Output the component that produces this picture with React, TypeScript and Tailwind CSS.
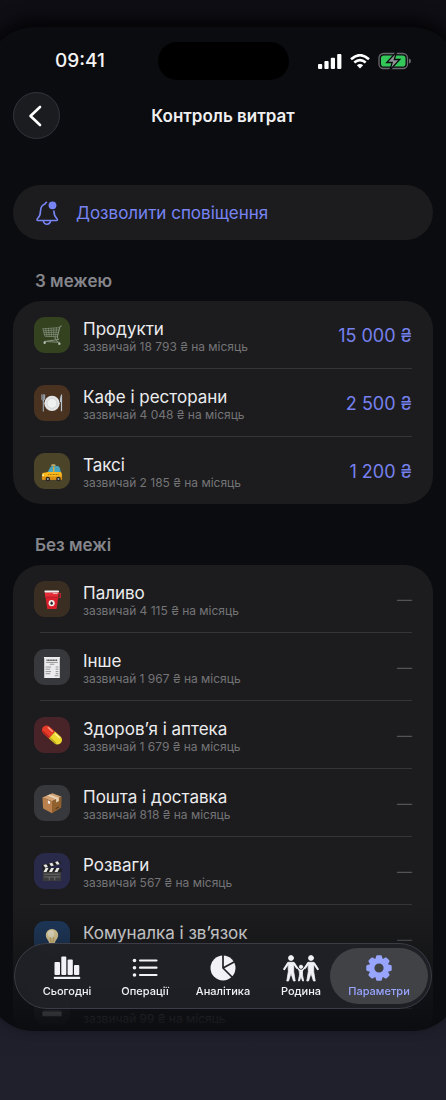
import React from "react";

type Row = { title?: string; usual?: string; limit?: string; tile: string; icon: React.ReactNode };

const Svg = ({ children }: { children: React.ReactNode }) => (
  <svg viewBox="0 0 24 24" className="h-[22px] w-[22px]" aria-hidden="true">{children}</svg>
);

const Cart = () => (
  <Svg>
    <g fill="none" stroke="#8b9584" strokeLinecap="round" strokeLinejoin="round">
      <path d="M22 2 L20.6 3.2 L17.8 14 L19 17 L4 19" strokeWidth="1.1" />
      <path d="M2.2 5.2 L19.8 4 M2.2 5.2 L4.2 13.4 L17.8 14 M2.8 7.4 L19.4 6.4 M3.3 9.4 L18.9 9 M3.8 11.4 L18.3 11.4 M5 5 L6.6 13.4 M8 4.8 L9 13.6 M11 4.6 L11.4 13.7 M14 4.4 L13.8 13.8 M17 4.2 L16 13.9" strokeWidth=".7" />
      <path d="M15 14.5 L18 19.5 M4 19 L20 20" strokeWidth="1" />
    </g>
    <circle cx="4" cy="20.500" r="1.3" fill="#b8bcb4" />
    <circle cx="20" cy="21.500" r="1.3" fill="#b8bcb4" />
  </Svg>
);

const Plate = () => (
  <Svg>
    <circle cx="12" cy="12.4" r="8.400" fill="#e4e5e6" />
    <circle cx="12" cy="12.4" r="5.4" fill="#eff0f0" stroke="#c7c8ca" strokeWidth=".7" />
    <path d="M1 3v5l1.5 1.6V21M2.5 3v6M4 3v5L2.5 9.6" fill="none" stroke="#a8bac8" strokeWidth="1" strokeLinecap="round" />
    <path d="M23 2c-2 2-2.500 5-2.300 9h1v10h1.300z" fill="#b5c6d2" />
  </Svg>
);

const Taxi = () => (
  <Svg>
    <g transform="translate(0 2)">
      <path d="M11.5 2.600h4l.5 2.200h-5z" fill="#b9ab6d" />
      <path d="M7 12l2.8-5.5Q10.4 5 12 4.8l6-.3q1.7 0 2.3 1.8L22 12z" fill="#48a3bd" />
      <path d="M13.200 5h1.300v7h-1.300zM7 11h15v1.500H7z" fill="#f5ad20" />
      <path d="M1.5 12.2L8 11h13.5l1.3 2v5.4q0 1-1.2 1H2.2q-1.2 0-1.2-1.3z" fill="#f9b91d" />
      <path d="M1 16h22v2.5q0 1-1.2 1H2.2q-1.2 0-1.2-1z" fill="#dc8e13" />
      <path d="M8 13.8h12" stroke="#805612" strokeWidth=".9" strokeDasharray="1 .7" />
      <circle cx="7.5" cy="18.8" r="2.5" fill="#252525" /><circle cx="7.5" cy="18.8" r="1.1" fill="#aaa" />
      <circle cx="19" cy="18.8" r="2.5" fill="#252525" /><circle cx="19" cy="18.8" r="1.1" fill="#aaa" />
      <circle cx="2.3" cy="14.6" r="1" fill="#fff0b0" />
    </g>
  </Svg>
);

const Cup = () => (
  <Svg>
    <path d="M17.5 6.2h3.6v4h-2" fill="none" stroke="#b5252b" strokeWidth="1.5" />
    <path d="M4.8 9.5h14L17 23H6.8z" fill="#d8202c" />
    <path d="M4 4.5h15.2l-.5 5.6H4.6z" fill="#e52e38" />
    <path d="M4.6 9.9h14.2" stroke="#8f141d" strokeWidth=".6" />
    <rect x="3.8" y="2.6" width="15.8" height="2.2" rx=".8" fill="#f1eeee" />
    <path d="M13 6h5" stroke="#e9b1b1" strokeWidth="1.1" />
    <circle cx="11.6" cy="16.500" r="3.3" fill="#f4f0ec" /><ellipse cx="11.6" cy="16.500" rx="1.3" ry="1.7" fill="#222" />
  </Svg>
);

const Receipt = () => (
  <Svg>
    <path d="M3 1h18l-.5 1.800V24h-17V2.800z" fill="#ececee" />
    <path d="M6 4.6h12" stroke="#555" strokeWidth="1.7" strokeDasharray="1.3 .4" />
    <path d="M5.6 7h12.8M9.5 9h5M5 12h6M5 14.4h5M5 17h6M5 19.3h5M16 12h3M16 14.4h3M16 17h3M16 19.3h3M15 21.5h4" stroke="#777" strokeWidth=".8" />
  </Svg>
);

const Pill = () => (
  <Svg>
    <g transform="rotate(42 12 12)">
      <path d="M12 7H4a5 5 0 0 0 0 10h8z" fill="#e63b28" />
      <path d="M12 7h8a5 5 0 0 1 0 10h-8z" fill="#eed72f" />
      <path d="M3.5 8.8h6" stroke="#ffa18c" strokeWidth="1.5" strokeLinecap="round" />
      <path d="M14 8.8h6" stroke="#fff299" strokeWidth="1.5" strokeLinecap="round" />
      <path d="M2 15.8h8.5" stroke="#aa2216" strokeWidth="1.2" strokeLinecap="round" />
      <path d="M13 15.8h8" stroke="#b6a01a" strokeWidth="1.2" strokeLinecap="round" />
    </g>
  </Svg>
);

const Box = () => (
  <Svg>
    <path d="M1.5 6L12.5 1.3 22.5 5.2 12 10.2z" fill="#d3a274" />
    <path d="M1.5 6L12 10.2V23.2L2.3 18z" fill="#b97f4c" />
    <path d="M22.5 5.2L12 10.2V23.2L22 17.3z" fill="#91602f" />
    <path d="M6.5 3.9l10 4.1v3.4l3-1.5V6.6L9.6 2.6z" fill="#e6d0b1" />
    <path d="M7.5 9.2l2.3 1v3l-2.3-1z" fill="#eee" />
    <path d="M16 18.2l3.3-1.8" stroke="#593c1e" strokeWidth="1.3" />
  </Svg>
);

const Clapper = () => (
  <Svg>
    <path d="M2 11.5h20v11.500H3q-1 0-1-1z" fill="#3b3b3c" />
    <path d="M2 8.8h20.5v4.4H2zM1 5.8L20.8 .8l1 3.6L2 9.2z" fill="#202020" />
    <path d="M5 8.8h3.2L6 13H2.7zM11 8.8h3.2L12 13H8.7zM17 8.8h3.2L18 13h-3.3zM2.6 5.4l3.2-.8 1.8 3-3 .8zM9 3.8l3.2-.8 1.8 3.1-3 .7zM15.4 2.2l3-.8 1.9 3.2-3 .7z" fill="#e7e7e4" />
    <path d="M3 15.5h18M3 18.5h18M9 18.5v3.7M15 18.5v3.7" stroke="#858585" strokeWidth=".7" />
  </Svg>
);

const Bulb = () => (
  <Svg>
    <path d="M12 1a6.7 6.7 0 0 0-6.7 6.8c0 4 3.2 5 3.7 9.2h6c.5-4.200 3.700-5.200 3.700-9.200A6.700 6.700 0 0 0 12 1z" fill="#f2dfa4" />
    <ellipse cx="11" cy="6.500" rx="3.500" ry="4" fill="#fff6d6" />
    <path d="M10 10l1 6M14 10l-1 6" stroke="#cba54e" strokeWidth=".8" />
    <path d="M9 17h6v4l-1.500 2h-3L9 21z" fill="#969a9e" />
  </Svg>
);

const Tray = () => (
  <Svg>
    <path d="M2 13h20M3 16h18" stroke="#777" strokeWidth="1" />
    <path d="M1.500 17h21v5h-21z" fill="#ccc" />
  </Svg>
);

const limited: Row[] = [
  { title: "Продукти", usual: "18 793", limit: "15 000 ₴", tile: "bg-[#35421f]", icon: <Cart /> },
  { title: "Кафе і ресторани", usual: "4 048", limit: "2 500 ₴", tile: "bg-[#4a3220]", icon: <Plate /> },
  { title: "Таксі", usual: "2 185", limit: "1 200 ₴", tile: "bg-[#4b4428]", icon: <Taxi /> },
];

const unlimited: Row[] = [
  { title: "Паливо", usual: "4 115", tile: "bg-[#3a2d22]", icon: <Cup /> },
  { title: "Інше", usual: "1 967", tile: "bg-[#37383b]", icon: <Receipt /> },
  { title: "Здоров’я і аптека", usual: "1 679", tile: "bg-[#482428]", icon: <Pill /> },
  { title: "Пошта і доставка", usual: "818", tile: "bg-[#37383b]", icon: <Box /> },
  { title: "Розваги", usual: "567", tile: "bg-[#29294a]", icon: <Clapper /> },
  { title: "Комуналка і зв’язок", tile: "bg-[#1f3a5e]", icon: <Bulb /> },
  { usual: "99", tile: "bg-[#303134]", icon: <Tray /> },
];

function List({ rows }: { rows: Row[] }) {
  return (
    <ul className="rounded-[28px] bg-[#1c1c1e] px-[21px]">
      {rows.map((r, i) => (
        <li key={i}>
          {i > 0 && <div className="ml-[6px] h-px bg-[#353537]" />}
          <div className="flex h-[67px] items-center">
            <div className={`flex size-9 shrink-0 items-center justify-center rounded-[11px] ${r.tile}`}>{r.icon}</div>
            <div className="ml-[13px] flex min-w-0 grow flex-col pt-[2px]">
              <span className="h-[22px] text-[17px] leading-[22px] text-[#ececee]">{r.title}</span>
              <span className="h-[14px] text-[12px] leading-[14px] text-[#747477]">
                {r.usual && `зазвичай ${r.usual} ₴ на місяць`}
              </span>
            </div>
            {r.limit ? (
              <button type="button" className="pt-[2px] text-[18px] leading-[22px] whitespace-nowrap text-[#7681ee]">{r.limit}</button>
            ) : (
              <button type="button" className="pt-[2px] text-[15px] leading-[22px] text-[#545457]">—</button>
            )}
          </div>
        </li>
      ))}
    </ul>
  );
}

const BarsIcon = () => (
  <svg viewBox="0 0 28 26" className="h-[26px] w-7" fill="currentColor" aria-hidden="true">
    <rect x="1.500" y="7" width="5.500" height="13" rx="1" /><rect x="8.300" y="1.500" width="5" height="18.500" rx="1" />
    <rect x="14.600" y="4.500" width="5.200" height="15.500" rx="1" /><rect x="21" y="10" width="5.300" height="10" rx="1" />
    <rect x=".7" y="21.800" width="26.600" height="2.200" rx="1" />
  </svg>
);
const ListIcon = () => (
  <svg viewBox="0 0 28 26" className="h-[26px] w-7" aria-hidden="true">
    <g fill="currentColor"><circle cx="3.500" cy="5.500" r="1.800" /><circle cx="3.500" cy="12.700" r="1.800" /><circle cx="3.500" cy="20" r="1.800" /></g>
    <path d="M9 5.500h16.500M9 12.700h16.500M9 20h16.500" stroke="currentColor" strokeWidth="2.200" strokeLinecap="round" />
  </svg>
);
const PieIcon = () => (
  <svg viewBox="0 0 28 26" className="h-[26px] w-7" fill="currentColor" aria-hidden="true">
    <circle cx="14" cy="13" r="12.500" />
    <path d="M14 -1v14l9.500 9.500M14 13l12-6.500" fill="none" stroke="#202126" strokeWidth="1.700" />
  </svg>
);
const FamilyIcon = () => (
  <svg viewBox="0 0 36 27" className="h-[27px] w-9" aria-hidden="true">
    <g fill="currentColor" stroke="currentColor" strokeLinecap="round" strokeLinejoin="round">
      <g strokeWidth=".8">
        <circle cx="8" cy="3" r="2.500" /><circle cx="28" cy="3" r="2.500" /><circle cx="18" cy="11.800" r="1.700" />
        <path d="M5.300 7.300h5.400v9.500l1.500 9.200h-1.700L8 18.300 5.500 26H3.800l1.500-9.200z" />
        <path d="M25.300 7.300h5.400v9.500l1.500 9.200h-1.700L28 18.300 25.500 26h-1.700l1.500-9.200z" />
        <path d="M16.500 15h3v5l1.100 6h-1L18 21.500 16.400 26h-1l1.100-6z" />
      </g>
      <g fill="none" strokeWidth="2.200">
        <path d="M5 8.300L1.300 14M11 8.300l2.700 4.200M31 8.300l3.700 5.700M25 8.300l-2.700 4.200" />
      </g>
      <path d="M14 12.500l2.800 3M22 12.500l-2.800 3" strokeWidth="1.500" fill="none" />
    </g>
  </svg>
);
const GearIcon = () => (
  <svg viewBox="0 0 28 28" className="h-7 w-7" aria-hidden="true">
    <g fill="currentColor">
      {[0, 45, 90, 135, 180, 225, 270, 315].map((a) => (
        <path key={a} d="M10.200 5.800l.9-3.600q.2-.9 1.100-.9h3.600q.9 0 1.100.9l.9 3.600z" transform={`rotate(${a} 14 14)`} />
      ))}
    </g>
    <circle cx="14" cy="14" r="7.300" fill="none" stroke="currentColor" strokeWidth="5.400" />
  </svg>
);

const tabs = [
  { label: "Сьогодні", icon: <BarsIcon /> },
  { label: "Операції", icon: <ListIcon /> },
  { label: "Аналітика", icon: <PieIcon /> },
  { label: "Родина", icon: <FamilyIcon /> },
  { label: "Параметри", icon: <GearIcon />, active: true },
];

export default function App() {
  return (
    <div className="min-h-screen overflow-hidden bg-linear-to-b from-[#0e0e14] to-[#1f202c] pt-[27px] pb-[69px] font-['Inter','Noto_Sans',sans-serif]">
      <main className="relative -mx-[15px] h-[1004px] overflow-hidden rounded-[50px] bg-[#0b0c10] px-7 shadow-[0_-8px_16px_0_#050507]">
        <header>
          <div className="grid h-[68px] grid-cols-3 items-center">
            <time className="pl-[42px] text-[19px] leading-6 font-medium text-[#f4f4f5]">09:41</time>
            <div className="h-[38px] w-[131px] justify-self-center rounded-full bg-black" />
            <div className="flex items-center justify-end gap-2 pr-[22px] text-white">
              <svg viewBox="0 0 24 15" className="h-[15px] w-6" fill="currentColor" aria-hidden="true">
                <rect x="0" y="10" width="4.200" height="5" rx="1" /><rect x="6.400" y="7" width="4.200" height="8" rx="1" />
                <rect x="12.800" y="3.800" width="4.200" height="11.200" rx="1" /><rect x="19.200" y="0" width="4.200" height="15" rx="1" />
              </svg>
              <svg viewBox="0 0 20 15" className="h-[15px] w-5" aria-hidden="true">
                <path d="M1 5.200q9-8 18 0M4.300 8.600q5.700-4.800 11.400 0" fill="none" stroke="currentColor" strokeWidth="2.600" />
                <path d="M6.800 11.200q3.200-2.500 6.400 0L10 14.500z" fill="currentColor" />
              </svg>
              <svg viewBox="0 0 33 18" className="h-[18px] w-[33px]" aria-hidden="true">
                <rect x="1" y="1.500" width="28.500" height="15" rx="4.500" fill="none" stroke="#68696c" strokeWidth="1.300" />
                <rect x="3" y="3.500" width="24.500" height="11" rx="2.800" fill="#34c759" />
                <path d="M31 6.500q2 .5 2 2.500t-2 2.500z" fill="#68696c" />
                <path d="M18.500 0L8.700 10.500h5.500L12 18l9.800-10.500h-5.500z" fill="#919295" stroke="#0b0c10" strokeWidth="1.300" />
              </svg>
            </div>
          </div>
          <div className="-mt-[3px] grid h-[46px] grid-cols-[47px_1fr_47px] items-center">
            <button type="button" aria-label="Назад" className="flex size-[47px] items-center justify-center rounded-full border border-[#33343b] bg-[#1b1c20] text-white">
              <svg viewBox="0 0 24 24" className="size-6" fill="none" stroke="currentColor" strokeWidth="2.600" strokeLinecap="round" strokeLinejoin="round" aria-hidden="true">
                <path d="M15 3L5.500 12l9.500 9" />
              </svg>
            </button>
            <h1 className="text-center text-[17px] leading-6 font-semibold text-[#f0f0f1]">Контроль витрат</h1>
          </div>
        </header>

        <button type="button" className="mt-[47px] flex h-[55px] w-full items-center gap-[17px] rounded-full bg-[#1c1c1e] pl-[22px] text-[#7784f4]">
          <svg viewBox="0 0 24 26" className="h-[26px] w-6" fill="none" stroke="currentColor" strokeWidth="1.600" strokeLinecap="round" strokeLinejoin="round" aria-hidden="true">
            <path d="M11.500 2.200q-.9.300-1.200 1.600C7 5 5.600 7.500 5.500 11c-.1 4-1 5.800-2.900 7.500-1 .9-.8 2 .4 2h18.400c1.200 0 1.400-1.100.4-2-1.900-1.700-2.800-3.500-2.900-7.500" />
            <path d="M8.500 20.700a3.500 3.500 0 0 0 7 0" />
            <circle cx="17.500" cy="5.300" r="3.900" fill="currentColor" stroke="none" />
          </svg>
          <span className="text-[17px] leading-6">Дозволити сповіщення</span>
        </button>

        <section>
          <h2 className="mt-[29px] mb-2 pl-[22px] text-[17px] leading-6 font-semibold text-[#85868b]">З межею</h2>
          <List rows={limited} />
        </section>
        <section>
          <h2 className="mt-[29px] mb-2 pl-[22px] text-[17px] leading-6 font-semibold text-[#85868b]">Без межі</h2>
          <List rows={unlimited} />
        </section>

        <div className="pointer-events-none absolute inset-x-0 bottom-0 h-[125px] bg-linear-to-b from-transparent via-[#0b0c10]/45 via-50% to-[#0b0c10]/95" />
        <nav className="absolute inset-x-[29px] bottom-[22px] grid h-[66px] grid-cols-5 rounded-full border border-[#3b3c45] bg-[#202126]/95 px-[13px] py-1 backdrop-blur-sm">
          {tabs.map((t) => (
            <a key={t.label} href="#" aria-current={t.active ? "page" : undefined}
              className={t.active
                ? "-mx-[10px] flex flex-col items-center rounded-full bg-[#414246] pt-[6px] text-[#98a5ff]"
                : "flex flex-col items-center pt-[6px] text-[#f2f2f6]"}>
              <span className="flex h-7 items-center">{t.icon}</span>
              <span className="mt-[2px] text-[11px] leading-[14px] font-medium">{t.label}</span>
            </a>
          ))}
        </nav>
      </main>
    </div>
  );
}
